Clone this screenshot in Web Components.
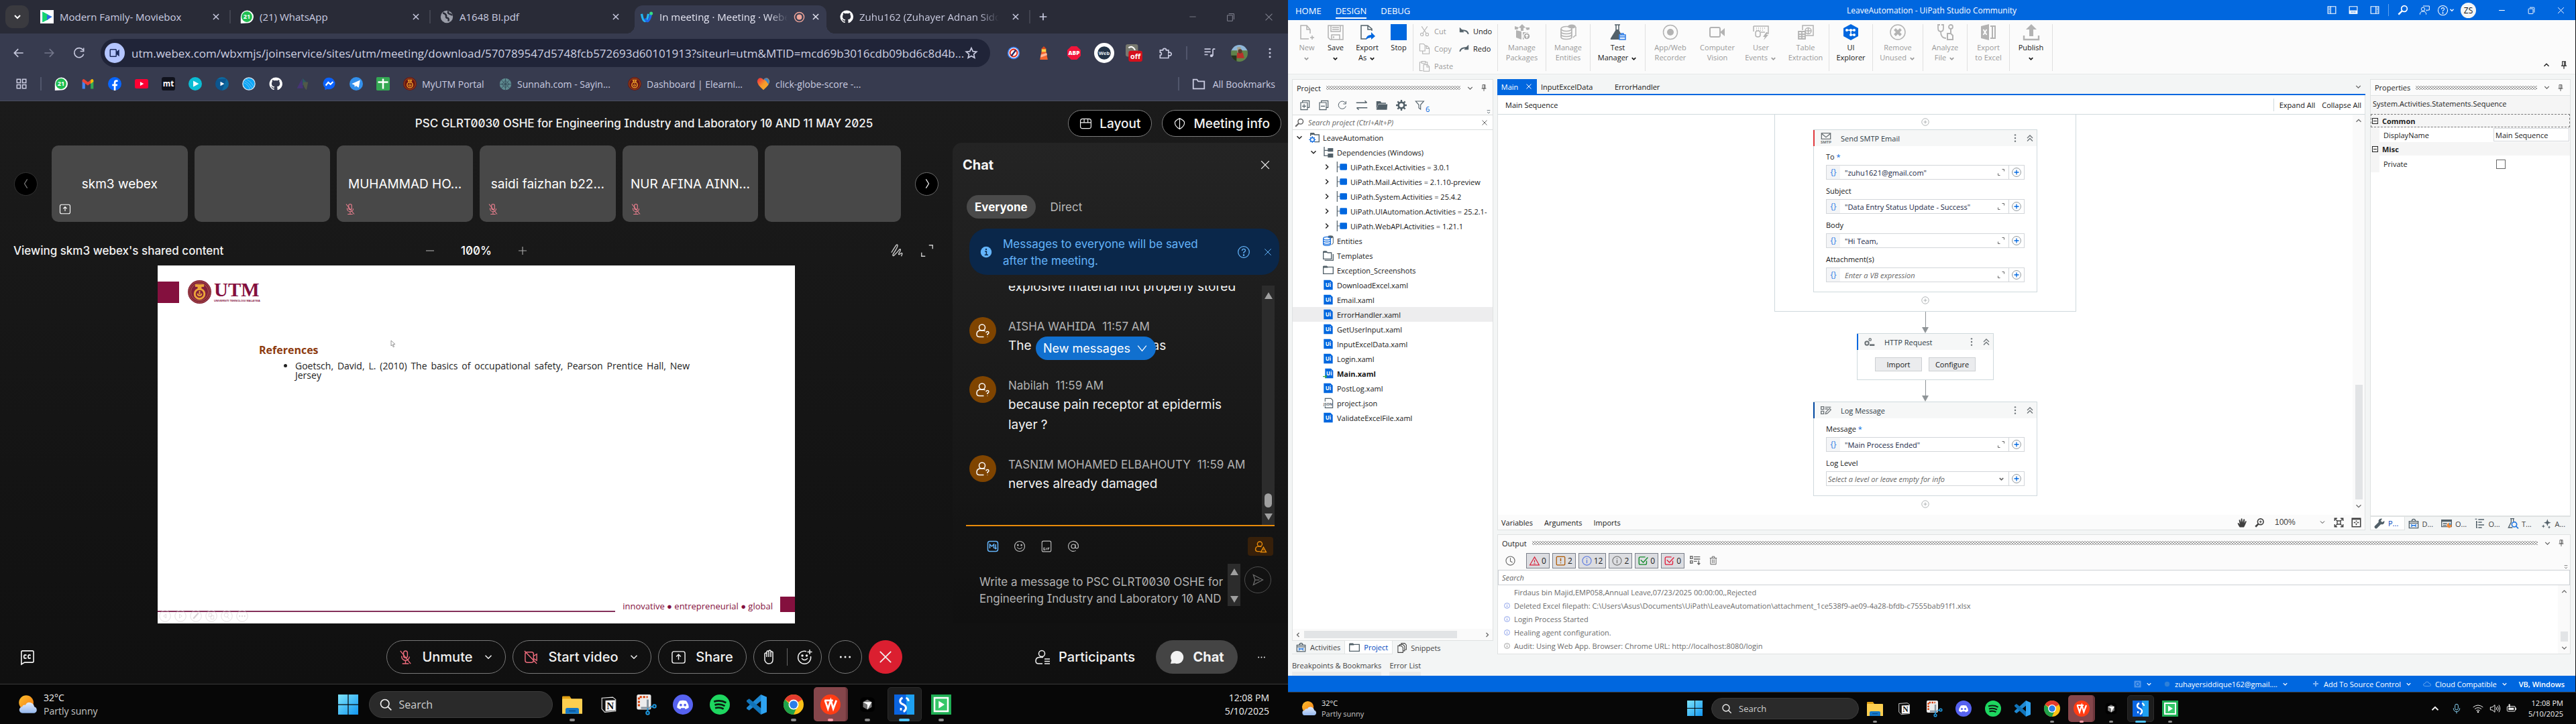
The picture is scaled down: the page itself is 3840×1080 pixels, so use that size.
<!DOCTYPE html>
<html lang="en">
<head>
<meta charset="utf-8">
<title>Desktop</title>
<style>
html,body{margin:0;height:100%;background:#000;overflow:hidden}
body{font-family:"Open Sans","Noto Sans",sans-serif}
</style>
</head>
<body>
<dual-desktop></dual-desktop>
<script>
const BASE = `*{box-sizing:border-box}
button,input,select,textarea{font:inherit;color:inherit;background:none;border:0;padding:0;margin:0;border-radius:0;outline:0}
button{display:flex;align-items:center;justify-content:center;white-space:nowrap}
a{color:inherit;text-decoration:none}`;
function define(tag, css, render){
  customElements.define(tag, class extends HTMLElement{
    connectedCallback(){
      if(this.shadowRoot) return;
      this.attachShadow({mode:'open'}).innerHTML = `<style>${BASE}${css}</style>${render(this)}`;
    }
  });
}
const ic = (name, size, extra='') => `<ui-icon name="${name}" size="${size}" ${extra}></ui-icon>`;
const F = 'stroke="none" fill="currentColor"';
const ICONS = {
  down:'<path d="M6 9l6 6 6-6"/>', up:'<path d="M6 15l6-6 6 6"/>', right:'<path d="M9 6l6 6-6 6"/>', left:'<path d="M15 6l-6 6 6 6"/>',
  wdown:'<path d="M4 7l8 10 8-10"/>', wleft:'<path d="M14 4L9 12l5 8"/>', wright:'<path d="M10 4l5 8-5 8"/>',
  x:'<path d="M5 5l14 14M19 5L5 19"/>', plus:'<path d="M12 4v16M4 12h16"/>', minus:'<path d="M4 12h16"/>',
  back:'<path d="M20 12H5M11 5l-7 7 7 7"/>', fwd:'<path d="M4 12h15M13 5l7 7-7 7"/>',
  reload:'<path d="M19 7A8.5 8.5 0 1 0 20 14M20 3v6h-6"/>',
  restore:'<rect x="5" y="8" width="11" height="12" rx="1"/><path d="M8 5h10q1 0 1 1v11"/>',
  star:'<path d="M12 3l2.7 6.2 6.600.6-5 4.400 1.500 6.600L12 17.300 6.200 20.800 7.700 14.200l-5-4.400 6.600-.6z"/>',
  dotsv:`<g ${F}><circle cx="12" cy="5" r="1.800"/><circle cx="12" cy="12" r="1.800"/><circle cx="12" cy="19" r="1.800"/></g>`,
  dotsh:`<g ${F}><circle cx="4" cy="12" r="1.800"/><circle cx="12" cy="12" r="1.800"/><circle cx="20" cy="12" r="1.800"/></g>`,
  camera:'<rect x="3" y="5" width="12" height="14" rx="1"/><path d="M15 11l5-4v10l-5-4" fill="currentColor"/>',
  apps:'<rect x="3" y="3" width="7" height="7"/><rect x="14" y="3" width="7" height="7"/><rect x="3" y="14" width="7" height="7"/><rect x="14" y="14" width="7" height="7"/>',
  folder:'<path d="M3 5h6l2 3h10v12H3z"/>',
  puzzle:'<path d="M4 7h5a3 3 0 1 1 6 0h4v5a3 3 0 1 1 0 4v5H4v-5a2.500 2.500 0 1 0 0-5z"/>',
  queue:`<path d="M3 5h11M3 10h11M3 15h6M18 5v12M18 5h4"/><circle cx="15.500" cy="17" r="2.500" ${F}/>`,
  rec:'<circle cx="12" cy="12" r="10" stroke="#f0a59a" stroke-width="2"/><circle cx="12" cy="12" r="5.500" fill="#f0a59a" stroke="none"/>',
  globe:'<circle cx="12" cy="12" r="11" fill="#9a9da8" stroke="none"/><path d="M5 5q5 1 6 5-1 4 2 4t2 6M15 2q-2 4 2 5t4 3" stroke="#292b37" stroke-width="3"/>',
  moviebox:'<rect width="24" height="24" fill="#fff" stroke="none"/><path d="M4 3l17 9-17 10z" fill="#15b6e8" stroke="none"/><path d="M4 3l10 5v9L4 22z" fill="#16d56e" stroke="none"/><path d="M12 8l9 4-9 6z" fill="#3468e0" stroke="none"/>',
  whatsapp:'<path d="M1 24V12A11.500 11.500 0 1 1 12 23.500z" fill="#fff" stroke="none"/><circle cx="12" cy="12" r="9.500" fill="#1fbd4f" stroke="none"/><text x="12" y="16" font-size="11" font-weight="700" text-anchor="middle" fill="#fff" stroke="none">21</text>',
  webex:'<path d="M3 7q2 13 6 13t6-13" stroke="#21b6f3" stroke-width="4"/><path d="M9 15q2 5 4 5 4 0 7-13" stroke="#1f66e8" stroke-width="4"/><circle cx="20" cy="6" r="3" fill="#35dc85" stroke="none"/>',
  github:'<path fill="#fff" stroke="none" d="M12 .5a11.500 11.500 0 0 0-3.600 22.400c.6.100.8-.3.8-.6v-2c-3.200.7-3.900-1.500-3.900-1.500-.5-1.300-1.300-1.700-1.300-1.700-1-.7.100-.7.100-.7 1.200.1 1.800 1.200 1.800 1.200 1 1.800 2.700 1.300 3.400 1 .1-.8.400-1.300.7-1.600-2.600-.3-5.300-1.300-5.300-5.700 0-1.300.5-2.300 1.200-3.100-.1-.3-.5-1.500.1-3.100 0 0 1-.3 3.200 1.200a11 11 0 0 1 5.800 0c2.200-1.500 3.200-1.200 3.200-1.200.6 1.600.2 2.800.1 3.100.7.800 1.200 1.800 1.200 3.100 0 4.400-2.700 5.400-5.300 5.700.4.400.8 1.100.8 2.200v3.200c0 .3.200.7.800.6A11.500 11.500 0 0 0 12 .5z"/>',
  gmail:'<g stroke="none"><path d="M2 6v15h5V10z" fill="#4285f4"/><path d="M22 6v15h-5V10z" fill="#34a853"/><path d="M2 6q1-4 5-1l5 4 5-4 0 6-5 4L2 8z" fill="#ea4335"/><path d="M17 5q4-3 5 1v2l-5 4z" fill="#fbbc04"/></g>',
  facebook:'<circle cx="12" cy="12" r="12" fill="#0866ff" stroke="none"/><path d="M10.500 24v-8H7.500v-3.500h3V10q0-5 4.500-5 1.500 0 2.500.3v3h-2q-1.800 0-1.800 2v2.200H17l-.6 3.500h-2.700v8z" fill="#fff" stroke="none"/>',
  youtube:'<rect y="3.500" width="24" height="17" rx="3" fill="#ff0033" stroke="none"/><path d="M9.500 8.500v7l6.500-3.500z" fill="#fff" stroke="none"/>',
  mt:'<rect width="24" height="24" rx="4" fill="#10121c" stroke="none"/><text x="12" y="16.500" font-size="14" font-weight="700" text-anchor="middle" fill="#fff" stroke="none">mt</text>',
  tealplay:'<circle cx="12" cy="12" r="12" fill="#0bbdd4" stroke="none"/><path d="M8.500 6.500v11l10-5.500z" fill="#fff" stroke="none"/>',
  blueplay:'<circle cx="12" cy="12" r="12" fill="#0d6aa0" stroke="none"/><path d="M3 4a12 12 0 0 0 9 20L20 3z" fill="#0a3c78" stroke="none" opacity=".45"/><path d="M9 8v8l7-4z" fill="#fff" stroke="none"/>',
  sphere:'<circle cx="12" cy="12" r="11" fill="#0ea5f5" stroke="#d5e7f4" stroke-width="1.500"/><path d="M4 6q9 5 14 14M7 3q9 5 14 14M3 10q8 3 11 12" stroke="#9ed4f6" stroke-width=".8"/>',
  prism:'<g stroke="none"><path d="M11 3L2 20h11z" fill="#473477"/><path d="M12 2l8 8-8 5z" fill="#2b5960"/><path d="M13 9h9l-3 14q-6-5-6-14" fill="#515849"/></g>',
  messenger:'<path d="M12 1a11 10.500 0 1 1-4 20.500L4 23v-4A10.500 10.500 0 0 1 12 1z" fill="#0a62ff" stroke="none"/><path d="M5.500 15l4.500-5.500 4 3.500 4.500-4.500" stroke="#fff" stroke-width="2.600"/>',
  telegram:'<circle cx="12" cy="12" r="12" fill="#3390ec" stroke="none"/><path d="M4 12l15-6.500-2.500 13.500-5-3.500-2 2.500-.7-4z" fill="#fff" stroke="none"/>',
  sheets:'<rect width="24" height="24" rx="2" fill="#34a853" stroke="none"/><path d="M12 3v18M3 9h18" stroke="#fff" stroke-width="3"/>',
  utm:'<circle cx="12" cy="12" r="12" fill="#6b1512" stroke="none"/><circle cx="12" cy="12" r="10" stroke="#a86420" stroke-width=".9"/><path d="M8 5.500h8M10 6v3h4V6" stroke="#e89a28" stroke-width="1.800"/><circle cx="12" cy="14" r="5" stroke="#e89a28" stroke-width="1.800"/><path d="M12 11v3.500M9.800 13.500q0 2.500 2.200 2.500t2.200-2.500" stroke="#e89a28" stroke-width="1.300"/>',
  seal:'<circle cx="12" cy="12" r="12" fill="#84203a" stroke="none"/><circle cx="12" cy="12" r="10.800" stroke="#c98a52" stroke-width=".6" stroke-dasharray="1 .6"/><circle cx="12" cy="12" r="9" stroke="#c98a52" stroke-width=".4"/><path d="M7.500 5.500h9" stroke="#eba53a" stroke-width="2.600"/><path d="M12 6v4" stroke="#eba53a" stroke-width="4"/><circle cx="12" cy="14" r="5" stroke="#eba53a" stroke-width="2"/><path d="M12 11v3.500M10 13.500q0 2.300 2 2.300t2-2.300" stroke="#eba53a" stroke-width="1.300"/>',
  sunnah:'<circle cx="12" cy="12" r="11" fill="#5e8a90" stroke="none"/><path d="M12 1v22M1 12h22M4 4l16 16M20 4L4 20M5 12l7-7 7 7-7 7z" stroke="#37505d" stroke-width="1.200"/>',
  heart:'<defs><linearGradient id="h" x1="0" x2="1" y1="0" y2="1"><stop offset=".15" stop-color="#f0443a"/><stop offset=".5" stop-color="#f79a2a"/><stop offset="1" stop-color="#f6b12a"/></linearGradient></defs><path d="M12 23Q0 13 1 7q2-7 8-5 2 1 3 3 1-2 3-3 6-2 8 5 1 6-11 16" fill="url(#h)" stroke="none"/><path d="M13 4q3-4 7-1 4 4 1 10-3-6-8-9" fill="#3e86c4" stroke="none"/>',
  noscript:'<circle cx="12" cy="12" r="11" fill="#4285f4" stroke="none"/><circle cx="12" cy="12" r="9" fill="#fff" stroke="none"/><circle cx="12" cy="12" r="6.500" stroke="#d93025" stroke-width="2.500"/><path d="M8 17l8-10" stroke="#222a66" stroke-width="3"/>',
  lighthouse:'<g stroke="none"><path d="M8 9h8l3 15H5z" fill="#f4652f"/><path d="M7 15l10-3 1 4-12 4z" fill="#ffb797"/><path d="M8 5h8v5H8z" fill="#ffd54a"/><path d="M7 5l5-5 5 5z" fill="#d9481c"/></g>',
  abp:'<path d="M7 0h10l7 7v10l-7 7H7l-7-7V7z" fill="#f2153a" stroke="none"/><text x="12" y="16" font-size="10" font-weight="800" text-anchor="middle" fill="#fff" stroke="none">ABP</text>',
  webbadge:'<circle cx="12" cy="12" r="12" fill="#fff" stroke="none"/><circle cx="12" cy="12" r="7.800" fill="#243447" stroke="none"/><text x="12" y="14" font-size="6" font-weight="700" text-anchor="middle" fill="#e6eef5" stroke="none">Web</text>',
  offext:'<rect width="17" height="17" rx="3" fill="#77796f" stroke="none"/><path d="M4 5q5-4 9 3" stroke="#fff" stroke-width="2"/><rect x="4" y="9" width="19" height="15" rx="3" fill="#d5101c" stroke="none"/><text x="13.500" y="20" font-size="10" font-weight="700" text-anchor="middle" fill="#fff" stroke="none">off</text>',
  avatar:'<defs><clipPath id="c"><circle cx="12" cy="12" r="12"/></clipPath></defs><g clip-path="url(#c)" stroke="none"><path fill="#8fb6d8" d="M0 0h24v9H0z"/><path fill="#60824a" d="M0 8h24v16H0z"/><path fill="#a6a28e" d="M9 3h5v8H9z"/><path fill="#b8302a" d="M9 11h8l2 8H8z"/><circle cx="13" cy="9" r="3" fill="#5a3c2c"/><path fill="#26331f" d="M0 15h8v9H0z"/></g>',
  sharebox:'<rect x="2" y="3" width="20" height="18" rx="3"/><path d="M12 16V8M8.500 11L12 7.500l3.500 3.500"/>',
  micoff:'<rect x="9" y="2" width="6" height="11" rx="3"/><path d="M6 10v1a6 6 0 0 0 12 0M12 17v4M7 22h10M4 2l16 20"/>',
  camoff:'<rect x="3" y="4" width="13" height="16" rx="3"/><path d="M16 10l5-3v10l-5-3M2 2l19 20"/>',
  layout:'<rect x="2" y="3" width="20" height="18" rx="4"/><path d="M2 10h20M9 3v7M16 3v7"/>',
  shield:'<path d="M12 2q9 4 9 8 0 7-9 12-9-5-9-12 0-4 9-8zM12 2v20"/>',
  scribble:'<path d="M2 15q5-8 7-11t3-1q1 2-7 14-2 4 1 3 6-6 9-10 3-2 1 3-4 6-1 5l3-2q3-1 0 5"/>',
  full:'<path d="M15 3h6v6M9 21H3v-6"/>',
  info:'<circle cx="12" cy="12" r="11" fill="currentColor" stroke="none"/><path d="M9.500 10.500H12.500v7M9 17.700h7" stroke="#0a274a" stroke-width="2"/><circle cx="12" cy="6.500" r="1.600" fill="#0a274a" stroke="none"/>',
  help:'<circle cx="12" cy="12" r="10"/><path d="M9 9.500q.2-3 3-3t3 2.700q0 1.800-3 3.300v2"/><circle cx="12" cy="17.500" r=".8" fill="currentColor"/>',
  guest:'<circle cx="11" cy="7.500" r="4.500"/><path d="M13.500 21.500H7q-4 0-4-4 0-5 5-5.500h5q1.500 0 2.500 1M17 15.500q.2-2 2-2t2 1.800q0 1.200-2 2.200v1.500M19 21.500v.5"/>',
  warnuser:'<circle cx="10" cy="7" r="4.500"/><path d="M11 21H6q-4 0-4-4 0-5 5-5.500h4l2 1M17 13l5 9H12zM17 17v2"/>',
  md:'<rect x="2" y="2" width="20" height="20" rx="4"/><path d="M6 16V8l4 4 4-4v8M17.500 8v9M15.500 15l2 2 2-2"/>',
  smile:'<circle cx="12" cy="12" r="10"/><path d="M7 14q5 6 10 0"/><circle cx="8.500" cy="9.500" r="1" fill="currentColor"/><circle cx="15.500" cy="9.500" r="1" fill="currentColor"/>',
  gif:'<rect x="3" y="1.500" width="18" height="21" rx="3"/><path d="M9 15H6.500v4H9v-2M12 15v4M15 19v-4h3M15 17h2"/>',
  at:'<circle cx="12" cy="12" r="4"/><path d="M16 8v5q0 3 3 3t3-4A10 10 0 1 0 17 20.500"/>',
  send:'<path d="M4 3l17 9-17 9 3-9zM7 12h8"/>',
  cc:'<path d="M4 2h16q2 0 2 2v14q0 2-2 2H8l-5 3V4q0-2 2-2"/><path d="M11 9q-4-2-4 2t4 2M17.500 9q-4-2-4 2t4 2" stroke-width="2"/>',
  hand:'<path d="M5 13V7q1.500-2 3 0V4q1.500-2 3 0V3q1.500-2 3 0v2q1.500-2 3 0v11q0 6-6 6-4 0-6-5zM8 7v5M11 4v8M14 5v7"/>',
  smileplus:'<path d="M20.500 11A9.500 9.500 0 1 1 14 3.700M7 14q4 5 9 0M19 1v7M15.500 4.500h7"/><circle cx="8" cy="10" r="1" fill="currentColor"/><circle cx="14.500" cy="10" r="1" fill="currentColor"/>',
  people:'<circle cx="11" cy="7" r="4.500"/><path d="M12 22H6q-4 0-4-4 0-5 5-5.500h6M15 15h8M15 18.500h8M15 22h8"/>',
  bubble:`<path d="M12 2a10 10 0 1 1-3 19.500L2 22l1.500-5A10 10 0 0 1 12 2z" ${F}/>`,
  cursor:'<path d="M6 2l12 11-6 .5 3 7-2.500 1-3-7L6 18z" fill="#fff" stroke="#777"/>',
  pleft:'<circle cx="12" cy="12" r="11"/><path d="M14 8l-5 4 5 4z"/>', pright:'<circle cx="12" cy="12" r="11"/><path d="M10 8l5 4-5 4z"/>',
  ppen:'<circle cx="12" cy="12" r="11"/><path d="M7 17l10-11" stroke-width="3"/>', pgrid:'<circle cx="12" cy="12" r="11"/><path d="M7 7h6v6H7zM11 11h6v7h-6z"/>',
  pzoom:'<circle cx="12" cy="12" r="11"/><circle cx="11" cy="10" r="4"/><path d="M13 13l4 5"/>', pdots:'<circle cx="12" cy="12" r="11"/><path d="M6 12h2M11 12h2M16 12h2" stroke-width="3"/>',
  search:'<circle cx="10.500" cy="10.500" r="7.500"/><path d="M16 16l6 6"/>',
  lens:'<circle cx="15" cy="9" r="6.500" stroke-width="2.400"/><path d="M10 14l-8 8" stroke-width="3.500"/>',
  weather:'<defs><linearGradient id="s" x1="0" y1="0" x2="1" y2="1"><stop stop-color="#fdbf2d"/><stop offset="1" stop-color="#f47b14"/></linearGradient><linearGradient id="k" x1="0" y1="0" x2="0" y2="1"><stop stop-color="#e2ecfb"/><stop offset="1" stop-color="#95b8ee"/></linearGradient></defs><circle cx="10" cy="10" r="9" fill="url(#s)" stroke="none"/><path d="M6 23a4 4 0 0 1-1-8q1-3 4-2 2-4 6-3 4 1 5 5 3 1 3 4t-3 4z" fill="url(#k)" stroke="none"/>',
  start:'<defs><linearGradient id="w" x1="0" y1="0" x2="1" y2="1"><stop stop-color="#7ee4fb"/><stop offset="1" stop-color="#1296f0"/></linearGradient></defs><path d="M0 0h11.500v11.500H0zM12.500 0H24v11.500H12.500zM0 12.500h11.500V24H0zM12.500 12.500H24V24H12.500z" fill="url(#w)" stroke="none"/>',
  explorer:'<g stroke="none"><path d="M0 3q0-1 1-1h8l2 3v6H0z" fill="#e0a014"/><path d="M0 6q0-1 1-1h22q1 0 1 1v17H0z" fill="#fdcf50"/><path d="M4 23v-5q0-2 2-2h12q2 0 2 2v5z" fill="#1478c8"/><path d="M8 19h8v1.200H8z" fill="#0b4a86"/></g>',
  notion:'<g stroke="none"><path d="M2 3l15-1 4 3v16l-15 1.500L2 18z" fill="#111" stroke="#e8e8e8" stroke-width="1"/><path d="M7 6.500L20.500 6v14L7 21z" fill="#fff"/><text x="13.700" y="18.500" font-size="14" font-family="Liberation Serif" font-weight="700" text-anchor="middle" fill="#111">N</text></g>',
  snip:'<rect x="1" y="0" width="17" height="18" rx="2" fill="#ececec" stroke="none"/><path d="M3.500 14V3H14" stroke="#d83b01" stroke-width="2.400" stroke-dasharray="2.500 1.500"/><path d="M14 6v10M6 16h11" stroke="#8a96a0" stroke-width="2.400"/><g stroke="#1e96dc" stroke-width="1.600"><path d="M14 16v4M17 14.500h3"/><circle cx="14" cy="22" r="1.800"/><circle cx="22" cy="14" r="1.800"/></g>',
  discord:'<circle cx="12" cy="12" r="12" fill="#5662f0" stroke="none"/><path d="M8 7.500q4-1 8 0 3 4 3 8-2 1.500-4 2l-1-1.500q-2 .5-4 0L9 17.500q-2-.5-4-2 0-4 3-8z" fill="#fff" stroke="none"/><g fill="#5662f0" stroke="none"><circle cx="9.500" cy="12.500" r="1.500"/><circle cx="14.500" cy="12.500" r="1.500"/></g>',
  spotify:'<circle cx="12" cy="12" r="12" fill="#1ed760" stroke="none"/><path d="M5 8.500q8-2.500 14.500 1.300M6 12.500q6.500-2 12 1.200M6.500 16.200q5.500-1.500 10 1" stroke="#0b1b10" stroke-width="2.100"/>',
  vscode:'<g stroke="none"><path d="M17 0l1 7L3 19 0 17V15.500z" fill="#1e88d2"/><path d="M17 24l1-7L3 5 0 7v1.500z" fill="#1173b8"/><path d="M17 0l7 3v18l-7 3z" fill="#2ea3f2"/></g>',
  chrome:'<g stroke="none"><circle cx="12" cy="12" r="12" fill="#fbc116"/><path d="M12 12L1.600 6A12 12 0 0 1 22.400 6z" fill="#e33b2e"/><path d="M12 12h-4L1.600 6A12 12 0 0 0 12 24l3-7z" fill="#1fa24a"/><circle cx="12" cy="12" r="6" fill="#fff"/><circle cx="12" cy="12" r="4.700" fill="#2a7de9"/></g>',
  wps:'<circle cx="12" cy="12" r="12" fill="#ff3c14" stroke="none"/><path d="M5 7h10M5.500 7l3.500 10 3.300-10 3 10 3.700-10" stroke="#fff" stroke-width="2.200"/>',
  cube:'<rect x="2" y="2" width="20" height="20" rx="5" fill="#000" stroke="none"/><path d="M12 5l6 3.500v7L12 19l-6-3.500v-7z" fill="#777" stroke="none"/><path d="M6 8.500h12L12 19v-7z" fill="#fff" stroke="none"/>',
  uipath:'<rect width="24" height="24" fill="#0a64e0" stroke="none"/><path d="M14 0h10v24h-9z" fill="#1ea0f0" stroke="none"/><path d="M10 4q-3 1-3 4 0 2.500 4 4 3 1.500 3 4 0 3-3 4.500" stroke="#fff" stroke-width="2.400"/><path d="M14 4q3 1 3 4M8 16v3" stroke="#fff" stroke-width="2.200"/>',
  player:'<rect width="24" height="24" fill="#1fae54" stroke="none"/><rect x="4" y="4" width="16" height="16" fill="#34c768" stroke="#fff" stroke-width="2"/><path d="M9 7.500v9l7-4.500z" fill="#fff" stroke="none"/>',
  tmic:'<rect x="8.500" y="2" width="7" height="13" rx="3.500"/><path d="M5 11v1a7 7 0 0 0 14 0v-1M12 19v4"/>',
  wifi:`<path d="M1 9q11-9 22 0M4.500 13q7.500-6 15 0M8 16.500q4-3 8 0"/><circle cx="12" cy="19.500" r="2" ${F}/>`,
  vol:'<path d="M2 9h4l6-5v16l-6-5H2zM15 9q2 3 0 6M18 6.500q4 5.500 0 11M21 4q5 8 0 16"/>',
  batt:`<rect x="2" y="7" width="18" height="11" rx="2"/><path d="M5 10h12v5H5z" ${F}/><path d="M21.500 10v5" stroke-width="2"/><path d="M7 2v7" stroke-width="3"/>`,
  pleftp:'<path d="M2 3h20v18H2z"/><path d="M9 3v18"/><path d="M5.500 6v13" stroke-width="2.500" stroke-dasharray="2 2"/>',
  pbotp:`<path d="M2 3h20v18H2z"/><path d="M2 13h20v8H2z" ${F}/><path d="M6 17h13" stroke="#0067df" stroke-width="2.500" stroke-dasharray="2 2"/>`,
  prightp:'<path d="M2 3h20v18H2z"/><path d="M15 3v18"/><path d="M18.500 6v13" stroke-width="2.500" stroke-dasharray="2 2"/>',
  feedback:'<circle cx="9" cy="10" r="4"/><path d="M2 22q0-7 7-7t7 7M9 3h14v9h-4l-2 2v-3"/>',
  newf:'<path d="M17 14V8l-5-6H3v20h12M12 2v6h5M20 17v6M17 20h6"/>',
  save:'<path d="M1 2h22v21H4l-3-3zM5 2v9h14V2M7 5h10M7 8h10M6 23v-7h12v7M9 18v3"/>',
  exportas:'<path d="M19 10V7l-6-5H3v20h8M13 2v6h6"/><path d="M10 23q1-7 8-7v-4l6 6-6 5v-3q-4 0-8 3z" fill="#0067df" stroke="none"/>',
  stop:'<path d="M0 0h24v24H0z" fill="#0067df" stroke="none"/>',
  cut:'<path d="M6 2l10 15M18 2L8 17"/><circle cx="6.500" cy="19" r="3"/><circle cx="17.500" cy="19" r="3"/>',
  copy:'<path d="M2 2h8l3 3v12H2zM13 6h4l5 5v12H8v-6M16 6v6h6"/>',
  paste:'<path d="M8 22H2V4h4M14 4h4v4M6 2h8v4H6z"/><path d="M10 9h8l4 4v10H10zM17 9v5h5"/>',
  undo:'<path d="M22 19q-2-10-16-9" stroke-width="3"/><path d="M2 4v10h9z" fill="currentColor"/>',
  redo:'<path d="M2 19q2-10 16-9" stroke-width="3"/><path d="M22 4v10h-9z" fill="currentColor"/>',
  packages:`<g ${F}><path d="M3 9l8 2v12l-8-3zM21 12h-8v11l8-3z"/><path d="M12 0l5 5-3 1v4h-4V6L7 5z"/><path d="M1 3l6 2-2 3-4 0zM23 5l-6 0 2 4 4-1z"/></g><circle cx="19" cy="18" r="5" fill="#aaa" stroke="#fbfbfb"/><path d="M19 21v-5M17 18l2-2 2 2" stroke="#fff"/>`,
  dbs:`<g stroke-width="1.700"><ellipse cx="9" cy="7" rx="8" ry="3.500"/><path d="M1 7v4q0 3.500 8 3.500t8-3.500V7M1 11v4q0 3.500 8 3.500t8-3.500v-4M1 15v4q0 3.500 8 3.500t8-3.500v-4"/></g><ellipse cx="17" cy="3.500" rx="6" ry="3" ${F}/><path d="M23 4v14M19 20l3-3"/>`,
  dbblue:'<ellipse cx="17" cy="3.500" rx="6" ry="3" fill="#526069" stroke="none"/><path d="M23 4v14l-4 3" stroke="#526069"/><g stroke="#1f74e0" stroke-width="2"><ellipse cx="9" cy="7" rx="8" ry="3.500"/><path d="M1 7v5q0 3 8 3t8-3V7M1 12v5q0 3 8 3t8-3v-5M1 16v4q0 3 8 3t8-3v-4"/></g>',
  flask:`<path d="M7 1h8M9 1v8M13 1v8"/><path d="M9 8h4l5 10-4 5H2q-2 0-1-2z" ${F}/><path d="M14 15h9v8h-9z" fill="#e3eefc" stroke="none"/><path d="M14 16h9v7h-9zM17 16v-2h3v2M14 19h9" stroke="#2f7ee6"/>`,
  recorder:`<circle cx="12" cy="12" r="10.500"/><circle cx="12" cy="12" r="5" ${F}/>`,
  vision:`<rect x="1" y="5" width="15" height="14" rx="2" stroke-width="2"/><path d="M16 12l7-6v12z" ${F}/>`,
  events:`<path d="M1 3h22v11h-4M1 3v8M5 6h1M8 6h1M11 6h1M14 6h1M17 6h1M5 9h1M8 9h1M11 9h1M14 9h1M12 12h6"/><rect x="4" y="10" width="7" height="9" rx="3"/><path d="M20 12l-5 7h3l-2 5 7-8h-3l2-4z" ${F}/>`,
  table:'<path d="M7 9V2h16v15H12"/><circle cx="15.500" cy="10" r="4.500"/><path d="M11 10h9M15.500 5.500v9"/><path d="M1 11h10v11H1zM1 15h10M1 18.500h10M6 11v11" stroke-width="1.800"/>',
  uiexp:'<path d="M12 0l11 6v12l-11 6L1 18V6z" fill="#0067df" stroke="none"/><path d="M6 9h11M12 9v7h5" stroke="#fff"/><g fill="#fff" stroke="none"><circle cx="6" cy="9" r="2"/><circle cx="12" cy="9" r="2"/><circle cx="17" cy="9" r="2"/><circle cx="17" cy="16" r="2"/><circle cx="12" cy="16" r="2"/></g>',
  remove:'<circle cx="12" cy="12" r="11"/><path d="M7.500 7.500l9 9M16.500 7.500l-9 9" stroke-width="4"/>',
  analyze:'<path d="M4 1H1v5q0 5 4 5t4-5V1H6M5 11q0 10 8 10" stroke-width="1.800"/><circle cx="20" cy="4" r="3" stroke-width="1.800"/><path d="M20 7v6M15 14h5l3 3v6h-8z" stroke-width="2"/>',
  excel:`<path d="M1 3l12-3v24L1 21z" ${F}/><path d="M15 3h7v18h-7M18 3v18" stroke-width="2"/><path d="M4.500 8l5 8M9.500 8l-5 8" stroke="#fff" stroke-width="1.800"/>`,
  publish:`<path d="M12 0l8 8h-5v10H9V8H4z" ${F}/><path d="M1 17v6h22v-6" stroke-width="2.400"/>`,
  pin:'<path d="M8 3h8v11H8zM5 14h14M12 14v8M13 3v11" stroke-width="2"/>',
  expandall:'<path d="M7 6V2h15v15h-4M3 6h15v16H3zM10.500 9.500v9M6 14h9" stroke-width="1.800"/>',
  collapseall:'<path d="M7 6V2h15v15h-4M3 6h15v16H3zM6 14h9" stroke-width="1.800"/>',
  swap:'<path d="M1 7h21M18 3l4 4M23 17H2M6 21l-4-4" stroke-width="1.800"/>',
  folderfill:`<path d="M1 4h8l2 3h9v2H5L1 20z" ${F}/><path d="M5 10h18l-1 11H1z" ${F}/>`,
  gear:'<circle cx="12" cy="12" r="6.500" stroke-width="4"/><path d="M12 0v5M12 19v5M0 12h5M19 12h5M3.500 3.500l4 4M16.500 16.500l4 4M3.500 20.500l4-4M16.500 7.500l4-4" stroke-width="3.500"/>',
  filter:'<path d="M2 3h18l-7 8v10l-4-3v-7z" stroke-width="1.700"/>',
  overflow:'<path d="M5 5h14M6 12l6 6 6-6" stroke-width="2.500"/>',
  projfolder:'<path d="M4 9V3h7l2 3h10v16H13" stroke="#526069" stroke-width="2"/><path d="M4 2h8l2 4H4z" fill="#526069" stroke="none"/><circle cx="8" cy="17" r="4.500" stroke="#1f74e0" stroke-width="2.400"/><path d="M8 9.500v3M8 21v3M.5 17h3M12.500 17h3M3 12l2 2M11 20l2 2M3 22l2-2M11 14l2-2" stroke="#1f74e0" stroke-width="2"/>',
  deps:`<path d="M3 0v20h9M3 8h9" stroke-width="2"/><path d="M11 3h12v8H11zM11 15h12v9H11z" ${F}/>`,
  dep:'<path d="M2 0v24M2 12h8" stroke="#526069" stroke-width="1.800"/><rect x="8" y="5" width="16" height="14" rx="2" fill="#0067df" stroke="none"/>',
  folders:'<path d="M1 4h7l3 2h8v14H1zM23 9v14H4" stroke-width="2"/><path d="M1 2h7l3 4H1z" fill="currentColor" stroke="none"/>',
  folderrow:'<path d="M1 5h22v15H1z" stroke-width="2"/><path d="M1 3h8l2 3H1z" fill="currentColor"/>',
  xaml:'<path d="M2 1h15l5 5v17H2z" fill="#0067df" stroke="none"/><text x="12" y="17" font-size="12" font-weight="700" text-anchor="middle" fill="#fff" stroke="none">Ui</text>',
  xamlmain:'<path d="M5 1h13l5 5v17H5z" fill="#0067df" stroke="none"/><text x="14" y="17" font-size="12" font-weight="700" text-anchor="middle" fill="#fff" stroke="none">Ui</text><path d="M0 19h8M5 16l3 3-3 3" stroke="#3aa648" stroke-width="2"/>',
  json:'<path d="M5 9V2h13l4 4v17H5v-4" stroke-width="1.700"/><text x="11" y="17.500" font-size="8" font-weight="700" text-anchor="middle" fill="currentColor" stroke="none">JSON</text>',
  toolbox:'<path d="M2 7h20v15H2zM8 7q0-5 4-5t4 5" stroke="#526069" stroke-width="2"/><path d="M2 11h20" stroke="#526069" stroke-width="2"/><path d="M6 14l3 2h6l3-2M6 19l3-2M18 19l-3-2" stroke="#1f74e0" stroke-width="2.200"/>',
  snippets:'<path d="M3 7h8l4 4v12H3zM7 7V4h8l4 4v11h-3M11 4V1h8l4 4v11h-3" stroke-width="1.700"/>',
  addc:'<circle cx="12" cy="12" r="10.500"/><path d="M12 7v10M7 12h10"/>',
  addb:'<circle cx="12" cy="12" r="11" stroke="#7d868c"/><path d="M12 6v12M6 12h12" stroke="#0067df" stroke-width="2.200"/>',
  collapse2:'<path d="M4 12l8-8 8 8M4 21l8-8 8 8" stroke-width="2.500"/>',
  smtp:'<path d="M2 1h20v13H2zM2 2l10 8 10-8" stroke-width="2"/><text x="12" y="23.500" font-size="9" font-weight="700" text-anchor="middle" fill="currentColor" stroke="none">SMTP</text>',
  http:`<circle cx="6" cy="15" r="4" stroke-width="3"/><circle cx="13" cy="7" r="2.500" stroke-width="2"/><path d="M12 17h11v4H12z" ${F}/>`,
  log:'<path d="M1 4h6v6H1zM1 14h6v6H1zM10 5h13M10 9h6" stroke-width="2"/><path d="M11 20l1-4 8-8 3 3-8 8z" stroke-width="1.800"/>',
  handf:`<path d="M6 23q-5-7-5-10 2-1 5 3L4 6q2-2 3 0l2 6V3q2-2 3 0l1 9 2-8q2-1 3 1l-1 8 3-5q2 0 2 2-3 8-6 13z" ${F}/>`,
  zoomf:'<circle cx="14" cy="10" r="7" stroke-width="2.600"/><path d="M9 15l-7 7" stroke-width="4"/><path d="M14 7v6M11 10h6" stroke-width="1.800"/>',
  fit:`<g stroke-width="2.200"><path d="M2 8V2h6M16 2h6v6M22 16v6h-6M8 22H2v-6M3 3l5 5M21 3l-5 5M3 21l5-5M21 21l-5-5"/><path d="M8 8h8v8H8z"/></g>`,
  overview:'<path d="M2 2h20v20H2zM2 4h20" stroke-width="2.500"/><path d="M12 7v3M12 14v4M6 12h4M14 12h4" stroke-width="2.500"/>',
  clock:'<circle cx="12" cy="12" r="10.500"/><path d="M12 5v8l5 3"/>',
  oerr:'<path d="M12 3l11 19H1z" stroke="#d8213b" stroke-width="2"/><path d="M12 10v6M12 18v2M9 19h1M14 19h1" stroke="#d8213b" stroke-width="2"/>',
  owarn:'<rect x="2" y="2" width="20" height="20" rx="2" stroke="#ad5700" stroke-width="2"/><path d="M12 6v7M12 16v2" stroke="#ad5700" stroke-width="2.400"/>',
  oinfo:'<circle cx="12" cy="12" r="10.500" stroke="#5a78e0" stroke-width="1.800"/><path d="M12 6v2M12 10v8" stroke="#5a78e0" stroke-width="2"/>',
  otrace:'<circle cx="12" cy="12" r="10.500" stroke="#727272" stroke-width="1.800"/><path d="M12 6v2M12 10v8" stroke="#727272" stroke-width="2"/>',
  ook:'<path d="M20 12v6q0 3-3 3H5q-3 0-3-3V6q0-3 3-3h12M6 10l6 6L23 4" stroke="#138a2b" stroke-width="2.200"/>',
  obad:'<path d="M20 12v6q0 3-3 3H5q-3 0-3-3V6q0-3 3-3h12M6 10l6 6L23 4" stroke="#e2203e" stroke-width="2.200"/>',
  listadd:'<path d="M1 3h5v5H1zM1 13h5v5H1zM9 4h14M9 9h14M9 14h7M20 12v9M17 18l3 3 3-3" stroke-width="2"/>',
  trash:'<path d="M3 6h18M5 6v16h14V6M9 6V2h6v4M10 9v10M14 9v10" stroke-width="1.700"/>',
  wrench:`<path d="M23 6l-5 3-3-3 3-5q-6-1-8 4v4L1 18q-1 2 1 4t4 1l9-9h4q5-2 4-8z" ${F}/>`,
  objrepo:'<path d="M1 3h22v5H1z" fill="#526069" stroke="none"/><path d="M1 4h22v15H1zM4 12h9M4 16h8" stroke="#526069" stroke-width="2"/><path d="M13 13l5-3 5 3v6l-5 3-5-3z" fill="#f0883a" stroke="none"/><path d="M18 10l5 3-5 3z" fill="#39a0e8" stroke="none"/>',
  outline:'<path d="M1 2h4M8 3h13M4 6v15M8 9h8M8 15h13M8 21h8M3 9h3M3 15h3M3 21h3" stroke-width="2"/>',
  testex:'<path d="M6 1h9M8 1v8L2 21h9M13 1v6" stroke="#526069" stroke-width="2"/><circle cx="15" cy="14" r="5.500" stroke="#1f74e0" stroke-width="2.500"/><path d="M19 18l5 5" stroke="#1f74e0" stroke-width="2.500"/>',
  sparkle:`<g ${F}><path d="M14 2l2 6 6 2-6 2-2 6-2-6-6-2 6-2z"/><path d="M5 14l1 3 3 1-3 1-1 3-1-3-3-1 3-1zM18 17l1 2 2 1-2 1-1 3-1-3-2-1 2-1z"/></g>`,
  cloud:'<path d="M6 19q-5 0-5-4t5-4q1-5 6-5t6 5q5 0 5 4t-4 4z"/>',
  dot:`<circle cx="12" cy="12" r="8" ${F}/>`,
  robot:'<rect x="1" y="1" width="22" height="22" rx="2" fill="#4d94ea" stroke="none"/><circle cx="12" cy="12" r="5.500" stroke="#0067df" stroke-width="2.500"/>'
};
define('ui-icon', ':host{display:inline-flex;flex:none}svg{display:block;overflow:visible}', el => {
  const s = el.getAttribute('size') || 24, w = el.getAttribute('weight') || 1.5;
  return `<svg width="${s}" height="${s}" viewBox="0 0 24 24" fill="none" stroke="currentColor" stroke-width="${w}" aria-hidden="true">${ICONS[el.getAttribute('name')] || ''}</svg>`;
});

/* ---------- browser window ---------- */
define('browser-tab', `
:host{display:block;flex:1;min-width:0;height:50px;padding:8px 0 0;position:relative;color:#c9cbe0;font-size:15px}
.t{display:flex;align-items:center;height:34px;margin:0 6px;padding:0 8px}
.n{flex:1;min-width:0;margin:0 9px;white-space:nowrap;overflow:hidden}
:host([fade]) .n{-webkit-mask-image:linear-gradient(90deg,#000 86%,transparent);mask-image:linear-gradient(90deg,#000 86%,transparent)}
:host([active]) .t{background:#373b4f;height:42px;padding-bottom:8px;border-radius:12px 12px 0 0;color:#e4e5f2}
:host([active]) .t::before,:host([active]) .t::after{content:"";position:absolute;bottom:0;width:12px;height:12px}
:host([active]) .t::before{left:-6px;background:radial-gradient(circle at 0 0,transparent 12px,#373b4f 12px)}
:host([active]) .t::after{right:-6px;background:radial-gradient(circle at 100% 0,transparent 12px,#373b4f 12px)}
:host([sep])::after{content:"";position:absolute;right:0;top:15px;width:2px;height:20px;background:#41434f}
.c{width:16px;margin-left:8px}`,
 el => `<div class="t">${ic(el.getAttribute('icon'),20)}<span class="n"><slot></slot></span>${el.hasAttribute('active')?ic('rec',17):''}<button class="c" aria-label="Close tab">${ic('x',14,'weight="2.5"')}</button></div>`);
define('browser-chrome', `
:host{display:block;background:#292b37;color:#c9cbe0}
.tabs{display:flex;height:50px;align-items:center;padding:0 0 0 8px}
.list{display:flex;width:1490px;margin-left:3px}
.drop{width:35px;height:34px;border-radius:11px;background:#3a3a3f;color:#fff}
.add{width:38px}
.win{margin-left:auto;display:flex;color:#80828f}.win button{width:57px;height:50px}
.bar{background:#373b4f;display:flex;height:50px;padding:8px 5px 0;align-items:center}
.bar>button{width:45px;height:42px;flex:none}
.bar>.dim{color:#74778c}
.url{flex:1;min-width:0;height:42px;margin:0 12px 0 10px;border-radius:21px;background:#202438;display:flex;align-items:center;padding:0 18px 0 6px}
.cam{width:30px;height:30px;border-radius:50%;background:#b4c5ff;color:#1b2b5c}
.url input{flex:1;min-width:0;margin:0 0 0 10px;font-size:17px;color:#cdd0e2}
.sep{width:22px;display:flex;justify-content:center}.sep i,.bm>i{width:2px;height:20px;background:#51566c}
.bm{background:#373b4f;height:51px;display:flex;align-items:center;font-size:14px;border-bottom:1px solid #4a4d5e;padding:0 19px 0 23px}
.bm>i:first-of-type{margin:0 9px 0 19px}
.q{width:40px}
.l{display:flex;align-items:center;gap:8px;white-space:nowrap}
.l.a{width:143px;margin-left:10px}.l.b{width:192px}
.all{margin-left:auto;display:flex;align-items:center;gap:10px}.all i{width:2px;height:20px;background:#51566c;margin-right:8px}`,
 () => `<div class="tabs"><button class="drop" aria-label="Search tabs">${ic('down',16,'weight="3"')}</button>
 <div class="list"><browser-tab icon="moviebox" sep>Modern Family- Moviebox</browser-tab><browser-tab icon="whatsapp" sep>(21) WhatsApp</browser-tab><browser-tab icon="globe">A1648 BI.pdf</browser-tab><browser-tab icon="webex" active fade>In meeting · Meeting · Webex</browser-tab><browser-tab icon="github" sep fade>Zuhu162 (Zuhayer Adnan Siddique)</browser-tab></div>
 <button class="add" aria-label="New tab">${ic('plus',16,'weight="2.5"')}</button>
 <div class="win"><button aria-label="Minimize">${ic('minus',14)}</button><button aria-label="Restore">${ic('restore',17)}</button><button aria-label="Close">${ic('x',17)}</button></div></div>
 <div class="bar"><button aria-label="Back">${ic('back',20,'weight="2"')}</button><button class="dim" aria-label="Forward">${ic('fwd',20,'weight="2"')}</button><button aria-label="Reload">${ic('reload',20,'weight="2"')}</button>
 <div class="url"><button class="cam" aria-label="Camera in use">${ic('camera',18,'weight="2"')}</button><input aria-label="Address" value="utm.webex.com/wbxmjs/joinservice/sites/utm/meeting/download/570789547d5748fcb572693d60101913?siteurl=utm&amp;MTID=mcd69b3016cdb09bd6c8d4b..."><button aria-label="Bookmark">${ic('star',20,'weight="2"')}</button></div>
 <button aria-label="Blocker">${ic('noscript',20)}</button><button aria-label="Lighthouse">${ic('lighthouse',20)}</button><button aria-label="ABP">${ic('abp',20)}</button><button aria-label="Web">${ic('webbadge',30)}</button><button aria-label="Extension off">${ic('offext',26)}</button><button aria-label="Extensions">${ic('puzzle',20,'weight="2"')}</button><span class="sep"><i></i></span><button aria-label="Media">${ic('queue',20,'weight="2"')}</button><button aria-label="Profile">${ic('avatar',25)}</button><button aria-label="Menu">${ic('dotsv',20)}</button></div>
 <div class="bm">${ic('apps',18,'weight="2"')}<i></i>${['whatsapp','gmail','facebook','youtube','mt','tealplay','blueplay','sphere','github','prism','messenger','telegram','sheets'].map(n=>`<button class="q" aria-label="${n}">${ic(n,20)}</button>`).join('')}
 <a class="l a" href="#">${ic('utm',20)}MyUTM Portal</a><a class="l b" href="#">${ic('sunnah',19)}Sunnah.com - Sayin...</a><a class="l b" href="#">${ic('utm',20)}Dashboard | Elearni...</a><a class="l" href="#">${ic('heart',20)}click-globe-score -...</a>
 <span class="all"><i></i>${ic('folder',22,'weight="2"')}All Bookmarks</span></div>`);

/* ---------- meeting ---------- */
define('video-tile', `
:host{display:grid;place-items:center;position:relative;background:#484848;border-radius:10px;height:114px;color:#fff;font-size:19px;white-space:nowrap}
ui-icon{position:absolute;left:11px;bottom:10px}.red{color:#ee8090}`,
 el => `<slot></slot>${el.getAttribute('badge')==='mute'?ic('micoff',18,'class="red"'):el.getAttribute('badge')==='share'?ic('sharebox',18):''}`);
define('shared-slide', `
:host{display:flex;flex-direction:column;position:relative;width:950px;flex:1;background:#fff;color:#222;font-family:"Open Sans",sans-serif;font-feature-settings:normal}
.brand{display:flex;align-items:center;padding-top:22px}
.sq{width:32px;height:32px;background:#84103e}
.brand ui-icon{margin:0 4px 0 13px}
.logo b{display:block;font:700 29px/26px "Liberation Serif",serif;color:#84103e}
.logo small{display:block;font:700 4px/7px "Liberation Sans",sans-serif;color:#84103e}
.body{padding:59px 157px 0 151px}
h2{margin:0;font-size:16px;line-height:20px;color:#8c3a0e}
ul{margin:7px 0 0;padding:0 0 0 54px;font-size:14px;line-height:14px;text-align:justify}
.foot{margin-top:auto;display:flex;align-items:flex-end;gap:11px;padding-bottom:17px;color:#84103e;font-size:12px;line-height:18px}
.foot hr{flex:1;border:0;height:2px;background:#84305a;margin:0}
.foot span:not(.sq){font-size:13px}
.foot .sq{width:22px;height:23px}
.ctl{position:absolute;left:2px;bottom:2px;display:flex;gap:5px;color:#d9d3d6}
.cur{position:absolute;left:345px;top:106px}`,
 () => `<div class="brand"><span class="sq"></span>${ic('seal',35)}<span class="logo"><b>UTM</b><small>UNIVERSITI TEKNOLOGI MALAYSIA</small></span></div>
 <div class="body"><h2>References</h2><ul><li>Goetsch, David, L. (2010) The basics of occupational safety, Pearson Prentice Hall, New Jersey</li></ul></div>
 <div class="foot"><hr><span>innovative ● entrepreneurial ● global</span><span class="sq"></span></div>
 <div class="ctl">${['pleft','pright','ppen','pgrid','pzoom','pdots'].map(n=>ic(n,18,'weight="1"')).join('')}</div><div class="cur">${ic('cursor',12)}</div>`);
define('chat-message', `
:host{display:flex;gap:18px}
.av{width:40px;height:40px;border-radius:50%;background:#7f4400;color:#fff;display:grid;place-items:center;flex:none}
.n{font-size:17px;line-height:28px;color:#b2b2b2;white-space:nowrap;display:flex;gap:10px}
.m{font-size:19px;line-height:30px;color:#f2f2f2}
:host(:not([from])) .av{visibility:hidden;height:0}`,
 el => `<span class="av">${ic('guest',24)}</span><div>${el.hasAttribute('from')?`<div class="n"><span>${el.getAttribute('from')}</span><span>${el.getAttribute('at')}</span></div>`:''}<div class="m"><slot></slot></div></div>`);
define('chat-panel', `
:host{display:flex;flex-direction:column;background:linear-gradient(#242424,#101010);border-radius:14px 0 0 0;color:#f5f5f5;min-height:0}
header{display:flex;justify-content:space-between;align-items:center;height:66px;padding:0 24px 0 15px;font-size:20px;font-weight:700}
nav{display:flex;margin:12px 0 15px 21px;font-size:17px;align-items:center;color:#b8b8b8}
nav button{height:35px;border-radius:18px;padding:0 12px}nav button:first-child{background:#4a4a4a;color:#fff;font-weight:700;margin-right:10px}
.ban{display:flex;align-items:center;height:69px;margin:0 13px 16px 25px;padding:0 9px 0 16px;border-radius:26px;background:#0a274a;color:#64b4fa;font-size:17px;line-height:25px}
.ban p{flex:1;margin:2px 16px 0}.ban button+button{margin-left:18px}
.list{flex:1;min-height:0;margin:0 20px;border-bottom:2px solid #e88b0a;display:flex;position:relative;overflow:hidden}
.msgs{flex:1;min-width:0;padding-left:5px;margin-top:-13px;display:flex;flex-direction:column;gap:30px}
.gap{display:inline-block;width:180px}
.sb{width:19px;background:#2c2c2c;display:flex;flex-direction:column;align-items:center;padding:10px 0 7px}
.sb i,.sb b{border:6px solid transparent;border-top:0;border-bottom:10px solid #9f9f9f}
.sb b{border-bottom:0;border-top:10px solid #9f9f9f}
.sb span{width:11px;height:21px;border-radius:6px;background:#9f9f9f;margin:auto 0 9px}
.new{position:absolute;left:104px;top:76px;height:35px;width:179px;border-radius:18px;background:#1170cf;color:#fff;font-size:18px;gap:8px}
.tools{display:flex;align-items:center;gap:22px;height:60px;padding:0 22px 0 51px;color:#bdbdbd}
.tools .w{margin-left:auto;width:38px;height:28px;background:#37200a;color:#e88b0a;border-radius:4px}
.tools .blue{color:#64b4fa}
.in{display:flex;padding:0 25px 0 40px;height:85px;align-items:flex-start}
textarea{flex:1;min-width:0;height:61px;resize:none;overflow:hidden;font-size:17px;line-height:25px;padding-top:11px}
textarea::placeholder{color:#b2b2b2;opacity:1}
.in .sb{height:63px;padding:7px 0 5px;margin:-4px 6px 0 0;justify-content:space-between}
.in .send{width:40px;height:40px;border:1px solid #4d4d4d;border-radius:50%;color:#6d6d6d}`,
 () => `<header>Chat<button aria-label="Close chat">${ic('x',20)}</button></header>
 <nav><button>Everyone</button><button>Direct</button></nav>
 <div class="ban">${ic('info',18)}<p>Messages to everyone will be saved<br>after the meeting.</p><button aria-label="Help">${ic('help',20)}</button><button aria-label="Dismiss">${ic('x',16)}</button></div>
 <div class="list"><div class="msgs"><chat-message>explosive material not properly stored</chat-message><chat-message from="AISHA WAHIDA" at="11:57 AM">The<span class="gap"></span>as</chat-message><chat-message from="Nabilah" at="11:59 AM">because pain receptor at epidermis<br>layer ?</chat-message><chat-message from="TASNIM MOHAMED ELBAHOUTY" at="11:59 AM">nerves already damaged</chat-message></div>
 <div class="sb"><i></i><span></span><b></b></div><button class="new">New messages ${ic('wdown',19)}</button></div>
 <div class="tools"><button class="blue" aria-label="Markdown">${ic('md',18,'weight="2"')}</button><button aria-label="Emoji">${ic('smile',18)}</button><button aria-label="GIF">${ic('gif',18)}</button><button aria-label="Mention">${ic('at',18)}</button><button class="w" aria-label="External users">${ic('warnuser',19,'weight="1.8"')}</button></div>
 <div class="in"><textarea aria-label="Message" placeholder="Write a message to PSC GLRT0030 OSHE for Engineering Industry and Laboratory 10 AND"></textarea><div class="sb"><i></i><b></b></div><button class="send" aria-label="Send">${ic('send',20)}</button></div>`);
define('meeting-app', `
:host{display:flex;flex-direction:column;flex:1;min-height:0;background:linear-gradient(#1b1b1b,#101010);color:#f2f2f2;font-family:Inter,"Open Sans",sans-serif;font-feature-settings:"zero","cv08"}
header{display:grid;grid-template-columns:1fr auto 1fr;align-items:center;height:62px;padding:4px 10px 0;font-size:17px;font-weight:500}
header div{display:flex;justify-content:flex-end;gap:15px;grid-column:3}
header span{grid-column:2}
header button{height:40px;border:1px solid #7c7c7c;border-radius:20px;background:#000;font-size:19px;gap:11px;padding:0 16px}
main{flex:1;min-height:0;display:grid;grid-template-columns:1fr 500px}
.stage{display:flex;flex-direction:column;align-items:center;padding-top:4px}
.strip{display:flex;align-items:center;width:100%;padding:0 21px;gap:21px}
.strip>button{width:35px;height:35px;border:1px solid #6b6b6b;border-radius:50%;background:#000;flex:none}
.strip>button:first-child{color:#777;border-color:#333}
.tiles{flex:1;display:grid;grid-template-columns:repeat(6,1fr);gap:10px}
.view{display:grid;grid-template-columns:1fr auto 1fr;align-items:center;width:100%;height:65px;padding:21px 20px 0;font-size:17px;font-weight:500}
.view div{display:flex;align-items:center;gap:37px;color:#aaa}.view b{color:#fff;font-weight:500}
.view div:last-child{justify-content:flex-end;gap:22px;padding-right:7px;color:#ccc}
footer{display:grid;grid-template-columns:1fr auto 1fr;align-items:center;height:90px;padding:10px 33px 0 29px;font-size:20px;font-weight:500}
.mid{display:flex;gap:10px;padding-left:4px}
.mid>button,.mid>div{height:50px;border:1px solid #777;border-radius:25px}
.mid>button{width:50px;gap:14px}
.mid>.unm{width:178px}.mid>.vid{width:207px}.mid>.shr{width:132px}
.mid>div{width:102px;display:flex;align-items:center;justify-content:center;gap:14px}.mid i{width:1px;height:26px;background:#666}
.mid>.end{background:#db1f30;border-color:#db1f30}
.unm>:first-child,.vid>:first-child{color:#ee6c7c}
.r{display:flex;justify-content:flex-end;align-items:center}
.r button{gap:12px;height:50px}.r .c{width:122px;background:#444;border-radius:25px;margin:0 29px 0 31px;font-weight:700}`,
 () => `<header><span>PSC GLRT0030 OSHE for Engineering Industry and Laboratory 10 AND 11 MAY 2025</span><div><button>${ic('layout',19)}Layout</button><button>${ic('shield',19)}Meeting info</button></div></header>
 <main><div class="stage"><div class="strip"><button aria-label="Previous">${ic('wleft',20)}</button><div class="tiles"><video-tile badge="share">skm3 webex</video-tile><video-tile></video-tile><video-tile badge="mute">MUHAMMAD HO...</video-tile><video-tile badge="mute">saidi faizhan b22...</video-tile><video-tile badge="mute">NUR AFINA AINN...</video-tile><video-tile></video-tile></div><button aria-label="Next">${ic('wright',20)}</button></div>
 <div class="view"><span>Viewing skm3 webex's shared content</span><div>${ic('minus',18)}<b>100%</b>${ic('plus',18)}</div><div>${ic('scribble',22)}${ic('full',22)}</div></div>
 <shared-slide></shared-slide></div><chat-panel></chat-panel></main>
 <footer><button aria-label="Captions" style="justify-self:start">${ic('cc',23,'weight="1.7"')}</button>
 <div class="mid"><button class="unm">${ic('micoff',23)}Unmute${ic('down',18,'weight="2"')}</button><button class="vid">${ic('camoff',23)}Start video${ic('down',18,'weight="2"')}</button><button class="shr">${ic('sharebox',23)}Share</button><div><button aria-label="Raise hand">${ic('hand',24)}</button><i></i><button aria-label="Reactions">${ic('smileplus',24)}</button></div><button aria-label="More">${ic('dotsh',20)}</button><button class="end" aria-label="Leave">${ic('x',28)}</button></div>
 <div class="r"><button>${ic('people',24)}Participants</button><button class="c">${ic('bubble',23)}Chat</button><button aria-label="More">${ic('dotsh',13)}</button></div></footer>`);

/* ---------- taskbar: both screens share it, sized with custom properties ---------- */
define('task-bar', `
:host{display:grid;grid-template-columns:1fr auto 1fr;align-items:center;background:#070707;border-top:1px solid #3a3a3a;color:#f0f0f0;height:48px;font-size:11px;line-height:16px;
 --cell:44px;--search:220px;--gap:13px;--pill:32px;--txt:13px;--pad:12px}
:host([large]){height:60px;font-size:14px;line-height:20px;--cell:55px;--search:274px;--gap:16px;--pill:40px;--txt:16px;--pad:14px}
.we{display:flex;align-items:center;gap:7px;padding-left:20px}
:host([large]) .we{padding-left:27px;gap:9px}
.we span span{color:#c4c4c4}
.c{display:flex;align-items:center;padding-left:var(--pad)}
.s{display:flex;align-items:center;width:var(--search);height:var(--pill);border-radius:20px;background:#2a2a2a;border:1px solid #3b3b3b;margin:0 2px 0 var(--gap);padding:0 14px;font-size:var(--txt)}
.s input{width:100%;margin-left:10px}.s input::placeholder{color:#cfcfcf;opacity:1}
.a{width:var(--cell);height:46px;position:relative;flex:none}
:host([large]) .a{height:57px}
.a.run::after{content:"";position:absolute;bottom:2px;left:50%;width:6px;height:3px;margin-left:-3px;border-radius:2px;background:#8c8c8c}
:host([large]) .a.run::after{width:8px;margin-left:-4px;height:4px;bottom:3px}
.a.wps::before,.a.uipath::before{content:"";position:absolute;inset:3px 2px;border-radius:5px;background:#85464b}
.a.wps::before{border-right:3px double #5b2b30}
.a.uipath::before{background:#1d1d1d;border:1px solid #2c2c2c}
.a ui-icon{position:relative}
.a.wps::after{background:#ff9aa4!important}.a.uipath::after{background:#4cc2ff!important;width:16px!important;margin-left:-8px!important}
.r{display:flex;justify-content:flex-end;align-items:center;text-align:right;padding-right:19px}
:host([large]) .r{padding-right:28px}
.r ui-icon{margin-right:9px}`,
 el => { const L = el.hasAttribute('large'), z = L?30:24;
  const apps = ['explorer','notion','snip','discord','spotify','vscode','chrome','wps','cube','uipath','player'];
  const run = 'explorer chrome wps cube uipath player';
  return `<div class="we">${ic('weather',L?29:23)}<span>32°C<br><span>Partly sunny</span></span></div>
  <div class="c"><button aria-label="Start">${ic('start',L?30:23)}</button><label class="s">${ic('search',L?20:16,'weight="2"')}<input aria-label="Search" placeholder="Search"></label>${apps.map(n=>`<button class="a ${n} ${run.includes(n)?'run':''}" aria-label="${n}">${ic(n,n==='cube'||n==='notion'?z-4:z)}</button>`).join('')}</div>
  <div class="r">${L?'':`${ic('up',18,'weight="2.5" style="margin-right:15px"')}${ic('tmic',16,'style="color:#8ad4f5;margin-right:16px"')}${ic('wifi',16)}${ic('vol',16)}${ic('batt',16,'style="margin-right:17px"')}`}<span>12:08 PM<br>5/10/2025</span></div>`; });

/* ---------- studio ---------- */
define('studio-title', `
:host{display:grid;grid-template-columns:1fr auto 1fr;height:30px;background:#0067df;color:#fff;font-size:12px;align-items:center}
nav{display:flex;gap:21px;padding-left:11px;font-size:13px}
nav button{height:22px;border-bottom:2px solid transparent;margin-top:4px}nav .on{border-color:#fff}
.r{display:flex;justify-content:flex-end;align-items:center}
.r button{width:32px;height:30px}.r i{width:1px;height:18px;background:#5ea0ee;margin:0 5px 0 4px}
.r .z{width:23px;height:23px;border-radius:50%;background:#f5f5f5;color:#111;margin:0 16px 0 6px}
.r .w{width:44px}`,
 () => `<nav><button>HOME</button><button class="on">DESIGN</button><button>DEBUG</button></nav><span>LeaveAutomation - UiPath Studio Community</span>
 <div class="r"><button aria-label="Left panel">${ic('pleftp',14,'weight="2"')}</button><button aria-label="Bottom panel">${ic('pbotp',14,'weight="2"')}</button><button aria-label="Right panel">${ic('prightp',14,'weight="2"')}</button><i></i><button aria-label="Search">${ic('lens',16)}</button><button aria-label="Feedback">${ic('feedback',16)}</button><button aria-label="Help">${ic('help',17)}${ic('down',10,'weight="3"')}</button><button class="z">ZS</button><button class="w" aria-label="Minimize">${ic('minus',13,'weight="2"')}</button><button class="w" aria-label="Restore">${ic('restore',15)}</button><button class="w" aria-label="Close">${ic('x',15)}</button></div>`);
define('ribbon-button', `
:host{display:block;flex:none;color:#53616a}
:host([off]),:host([dim]){color:#b3b3b3}
button{width:100%;height:70px;flex-direction:column;justify-content:flex-start;gap:3px;line-height:15px}
span{display:block;text-align:center;color:#161616}
:host([off]) span{color:#9a9a9a}
ui-icon{vertical-align:middle}`,
 el => { const [a,b=''] = el.getAttribute('label').split('|');
  const ch = el.hasAttribute('menu') ? ic('down',11,'weight="3.5"') : '';
  return `<button>${ic(el.getAttribute('icon'),24)}<span>${a}${b||ch?`<br>${b} ${ch}`:''}</span></button>`; });
define('studio-ribbon', `
:host{display:flex;height:81px;background:#fbfbfb;border-bottom:1px solid #e6e8e8;padding:6px 6px 0;font-size:11px}
i{width:1px;height:70px;background:#e0e0e0;flex:none}
.clip{display:grid;grid-template-columns:60px 56px;grid-auto-flow:column;grid-template-rows:repeat(3,20px);row-gap:6px;padding-left:8px;width:125px}
.clip button{justify-content:flex-start;gap:6px;color:#9a9a9a}.clip .on{color:#161616}.clip .on ui-icon{color:#53616a}.clip .off ui-icon{color:#b3b3b3}
.end{margin-left:auto;display:flex;gap:12px;align-items:flex-end;height:68px;padding-right:4px;color:#222}`,
 () => { const b=(i,l,w,o='')=>`<ribbon-button icon="${i}" label="${l}" style="width:${w}px" ${o}></ribbon-button>`;
 return b('newf','New',44,'off menu')+b('save','Save',42,'menu dim')+b('exportas','Export|As',52,'menu')+b('stop','Stop',42)+'<i></i>'+
 `<div class="clip"><button class="off">${ic('cut',17)}Cut</button><button class="off">${ic('copy',17)}Copy</button><button class="off">${ic('paste',17)}Paste</button><button class="on">${ic('undo',15)}Undo</button><button class="on">${ic('redo',15)}Redo</button></div><i></i>`+
 b('packages','Manage|Packages',71,'off')+'<i></i>'+b('dbs','Manage|Entities',65,'off')+'<i></i>'+b('flask','Test|Manager',81,'menu')+'<i></i>'+
 b('recorder','App/Web|Recorder',74,'off')+b('vision','Computer|Vision',66,'off')+b('events','User|Events',64,'off menu')+b('table','Table|Extraction',69,'off')+'<i></i>'+
 b('uiexp','UI|Explorer',64)+'<i></i>'+b('remove','Remove|Unused',74,'off menu')+'<i></i>'+b('analyze','Analyze|File',65,'off menu style-dark')+'<i></i>'+b('excel','Export|to Excel',62,'off')+'<i></i>'+b('publish','Publish',63,'menu dim')+'<i></i>'+
 `<div class="end"><button aria-label="Collapse ribbon">${ic('up',14,'weight="2.5"')}</button><button aria-label="Pin ribbon">${ic('pin',14)}</button></div>`; });
define('panel-head', `
:host{display:flex;align-items:center;height:24px;padding:0 7px 0 6px;font-size:11px;color:#222;gap:8px}
.g{flex:1;height:6px;background:radial-gradient(circle,#9a9a9a 0 .7px,transparent .9px) 0 0/4px 4px,radial-gradient(circle,#9a9a9a 0 .7px,transparent .9px) 2px 2px/4px 4px}
button{color:#666}`,
 () => `<slot></slot><span class="g"></span><button aria-label="Options">${ic('down',13,'weight="2.5"')}</button><button aria-label="Pin">${ic('pin',12)}</button>`);
define('tree-row', `
:host{display:flex;align-items:center;height:22px;white-space:nowrap;color:#526069}
.t{color:#161616;margin-left:5px}
:host([bold]) .t{font-weight:700}:host([sel]){background:#ededee}
.ch{width:18px;color:#222;display:flex}.ch+ui-icon{margin-left:3px}
:host([depth="0"]) .ch{margin-left:3px}:host([depth="1"]) .ch{margin-left:24px}:host([depth="2"]) .ch{margin-left:44px}`,
 el => { const open=el.getAttribute('open');
  return `<span class="ch">${open?ic(open==='yes'?'down':'right',14,'weight="2.5"'):''}</span>${ic(el.getAttribute('icon'),16)}<span class="t"><slot></slot></span>`; });
define('project-panel', `
:host{display:flex;flex-direction:column;width:300px;font-size:11px}
.p{flex:1;min-height:0;background:#fff;border:1px solid #dfe2e2;display:flex;flex-direction:column;overflow:hidden}
.top{background:#fbfbfb}
.tb{display:flex;gap:12px;height:28px;padding:0 2px 0 10px;align-items:center;color:#526069}
.tb b{color:#0067df;font-weight:400;margin-left:-12px;align-self:flex-end;line-height:16px}.tb ui-icon:last-child{margin-left:auto;align-self:flex-end}
.s{display:flex;align-items:center;height:23px;border:1px solid #d9dcdc;border-width:1px 0;padding:0 6px 0 3px;gap:6px;color:#666}
.s input{flex:1;font-style:italic}.s input::placeholder{color:#666;opacity:1}
.tree{flex:1}
.hs{display:flex;align-items:center;height:17px;background:#fafafa;padding:0 2px;color:#666;gap:3px}.hs i{width:228px;height:11px;background:#e2e4e6}.hs ui-icon:last-child{margin-left:auto}
.tabs{display:flex;height:20px;color:#444}
.tabs button{gap:6px;padding:0 6px;border:1px solid #e1e4e4;border-top:0;border-left:0}
.tabs .on{background:#fff;color:#0048c0}.tabs button:last-child{border:0}`,
 () => `<div class="p"><div class="top"><panel-head>Project</panel-head><div class="tb">${['expandall','collapseall','reload','swap','folderfill','gear','filter'].map(n=>ic(n,n==='folderfill'||n==='swap'?18:16)).join('')}<b>6</b>${ic('overflow',8)}</div></div>
 <label class="s">${ic('lens',14)}<input placeholder="Search project (Ctrl+Alt+P)" aria-label="Search project"><button aria-label="Clear">${ic('x',12,'weight="2"')}</button></label>
 <div class="tree"><tree-row depth="0" open="yes" icon="projfolder">LeaveAutomation</tree-row><tree-row depth="1" open="yes" icon="deps">Dependencies (Windows)</tree-row>
 ${['UiPath.Excel.Activities = 3.0.1','UiPath.Mail.Activities = 2.1.10-preview','UiPath.System.Activities = 25.4.2','UiPath.UIAutomation.Activities = 25.2.1-','UiPath.WebAPI.Activities = 1.21.1'].map(t=>`<tree-row depth="2" open="no" icon="dep">${t}</tree-row>`).join('')}
 <tree-row depth="1" icon="dbblue">Entities</tree-row><tree-row depth="1" icon="folders">Templates</tree-row><tree-row depth="1" icon="folderrow">Exception_Screenshots</tree-row>
 ${['DownloadExcel','Email','ErrorHandler','GetUserInput','InputExcelData','Login','Main','PostLog','','ValidateExcelFile'].map(t=>t?`<tree-row depth="1" icon="${t==='Main'?'xamlmain':'xaml'}" ${t==='Main'?'bold':''} ${t==='ErrorHandler'?'sel':''}>${t}.xaml</tree-row>`:'<tree-row depth="1" icon="json">project.json</tree-row>').join('')}</div>
 <div class="hs">${ic('left',12,'weight="2.5"')}<i></i>${ic('right',12,'weight="2.5"')}</div></div>
 <div class="tabs"><button>${ic('toolbox',15)}Activities</button><button class="on">${ic('folderrow',16,'style="color:#526069"')}Project</button><button>${ic('snippets',15)}Snippets</button></div>`);
define('expr-field', `
:host{display:block;margin-bottom:9px}
label{display:block;line-height:16px;color:#161616}label b{color:#0067df;font-weight:400}
.f{display:flex;margin-top:4px;height:22px;border:1px solid #d3d6da;background:#fff;align-items:center}
.b{width:20px;align-self:stretch;background:#f4f5f7;color:#2f7ee6;display:grid;place-items:center;line-height:1;font-size:12px}
input,select{flex:1;min-width:0;height:20px;appearance:none;color:#182746}
input{padding-left:7px}
select{padding-left:2px;font-style:italic;color:#666}
input::placeholder{color:#666;font-style:italic;opacity:1}
.e{color:#666;margin-right:5px}
.p{width:23px;align-self:stretch;border-left:1px solid #d3d6da}`,
 el => { const k=el.getAttribute('kind')==='select';
  return `<label for="i">${el.getAttribute('label')}${el.hasAttribute('required')?' <b>*</b>':''}</label><div class="f">${k?`<select id="i"><option>${el.getAttribute('placeholder')}</option></select>${ic('down',11,'weight="3.5" class="e"')}`:`<span class="b">{}</span><input id="i" value='${el.getAttribute('value')||''}' placeholder="${el.getAttribute('placeholder')||''}">${ic('full',12,'weight="2" class="e"')}`}<button class="p" aria-label="Add">${ic('addb',14)}</button></div>`; });
define('activity-card', `
:host{display:block;border:1px solid #cfd9dd;background:#fff;--bar:#0067df;width:334px}
header{display:flex;align-items:center;height:24px;background:#f6f7f7;border-left:2px solid var(--bar);margin-left:-1px;padding:0 4px 0 9px;color:#6b7276}
header b{font-weight:400;color:#2d3a45;margin-left:14px;flex:1}
header button+button{margin-left:8px}
.b{padding:8px 18px 5px}`,
 el => `<header>${ic(el.getAttribute('icon'),16)}<b>${el.getAttribute('heading')}</b><button aria-label="Options">${ic('dotsv',16)}</button><button aria-label="Collapse">${ic('collapse2',12)}</button></header><div class="b"><slot></slot></div>`);
define('flow-arrow', `:host{display:flex;flex-direction:column;align-items:center;height:32px;flex:none}i{flex:1;width:1px;background:#8f9497}b{border:5px solid transparent;border-bottom:0;border-top:9px solid #8f9497}`, () => '<i></i><b></b>');
define('workflow-editor', `
:host{display:flex;flex-direction:column;flex:1;min-width:0;font-size:11px;color:#161616}
.tabs{display:flex;height:24px;border-bottom:2px solid #0067df}
.tabs button{height:22px;padding:0 6px}.tabs .on{background:#0067df;color:#fff;gap:10px;width:59px}
.tabs button:nth-child(2){width:90px;margin-right:20px;justify-content:flex-start}
.tabs button:last-child{margin-left:auto;padding:0 4px;color:#666}
.crumb{display:flex;align-items:center;height:29px;background:#fff;border:1px solid #dfe2e2;border-bottom-color:#cfd9dd;border-top:0;padding:0 5px 0 11px}
.crumb i{margin-left:auto;width:1px;height:19px;background:#cfd9dd;margin-right:8px}.crumb button+button{margin-left:10px}
.mid{flex:1;min-height:0;display:flex;background:#fff;border:1px solid #dfe2e2;border-width:0 1px}
.cv{flex:1;display:flex;flex-direction:column;align-items:center;overflow:hidden}
.box{width:450px;border:1px solid #cfd9dd;border-top:0;display:flex;flex-direction:column;align-items:center;padding:3px 0 8px;flex:none}
.add{height:16px;color:#9a9fa2;margin:0 0 3px}
.add.t{margin:4px 0 0}
.btns{display:flex;justify-content:center;gap:10px;padding:3px 0 7px}
.btns button{width:70px;height:21px;background:#ebecee;border:1px solid #cdd0d3}
.vs{width:18px;background:#fafafa;display:flex;flex-direction:column;align-items:center;color:#666;padding:2px 0 6px}
.vs i{width:11px;height:171px;background:#e2e4e6;margin-top:auto;margin-bottom:3px}
.bot{display:flex;align-items:center;height:23px;background:#fbfbfb;border:1px solid #dfe2e2;border-top:0;padding:0 5px}
.bot button+button{margin-left:17px}
.bot .t{margin-left:auto;display:flex;align-items:center;gap:11px;color:#404040}.bot .t span{width:54px;margin-left:4px;font-family:"Liberation Sans",sans-serif;font-size:12px}
activity-card.s{width:204px}`,
 () => `<div class="tabs"><button class="on">Main ${ic('x',12,'weight="2"')}</button><button>InputExcelData</button><button>ErrorHandler</button><button aria-label="Tab list">${ic('down',13,'weight="2.5"')}</button></div>
 <div class="crumb"><span>Main Sequence</span><i></i><button>Expand All</button><button>Collapse All</button></div>
 <div class="mid"><div class="cv"><div class="box"><button class="add" aria-label="Add activity">${ic('addc',12)}</button>
 <activity-card icon="smtp" heading="Send SMTP Email" style="--bar:#e0393e"><expr-field label="To" required value='"zuhu1621@gmail.com"'></expr-field><expr-field label="Subject" value='"Data Entry Status Update - Success"'></expr-field><expr-field label="Body" value='"Hi Team,'></expr-field><expr-field label="Attachment(s)" placeholder="Enter a VB expression"></expr-field></activity-card>
 <button class="add t" aria-label="Add activity">${ic('addc',12)}</button></div><flow-arrow></flow-arrow>
 <activity-card class="s" icon="http" heading="HTTP Request"><div class="btns"><button>Import</button><button>Configure</button></div></activity-card><flow-arrow></flow-arrow>
 <activity-card icon="log" heading="Log Message" style="--bar:#0048a0"><expr-field label="Message" required value='"Main Process Ended"'></expr-field><expr-field label="Log Level" kind="select" placeholder="Select a level or leave empty for info"></expr-field></activity-card>
 <button class="add t" aria-label="Add activity">${ic('addc',12)}</button></div>
 <div class="vs">${ic('up',14,'weight="2"')}<i></i>${ic('down',14,'weight="2"')}</div></div>
 <div class="bot"><button>Variables</button><button>Arguments</button><button>Imports</button><div class="t">${ic('handf',15)}${ic('zoomf',15)}<span>100%</span><button aria-label="Zoom level">${ic('down',12,'weight="2"')}</button>${ic('fit',15)}${ic('overview',15)}</div></div>`);
define('properties-panel', `
:host{display:flex;flex-direction:column;width:299px;font-size:11px;color:#222}
.p{flex:1;background:#fff;border:1px solid #dfe2e2;border-bottom:2px solid #dfe2e2}
panel-head{background:#fbfbfb;border-bottom:1px solid #dfe2e2;padding-right:8px}
.ty{height:27px;background:#f5f5f5;padding:4px 3px}
.g{height:20px;background:#f5f5f5;font-weight:700;display:flex;align-items:center;gap:6px;padding-left:2px}
.g.f{outline:1px dashed #777;outline-offset:-1px}
.g i{width:9px;height:9px;border:1px solid #222;display:grid;place-items:center}.g i::after{content:"";width:5px;height:1px;background:#222}
.r{display:flex;align-items:center;height:22px;padding-left:6px;border-left:13px solid #f5f5f5;background:#fff}
.r.b{height:25px}
.r label{width:164px}
.r input[type=text]{flex:1;min-width:0;height:20px;border:1px solid #d3d6da;padding-left:2px;margin-right:1px}
.r input[type=checkbox]{appearance:none;width:14px;height:14px;border:1px solid #666;background:#fff;margin-left:4px}
.tabs{display:flex;height:20px}
.tabs button{flex:1;justify-content:flex-start;gap:5px;padding-left:5px;color:#526069}.tabs span{color:#444}.tabs .on{background:#fff;border:1px solid #dfe2e2;border-top:0}.tabs .on span{color:#0048c0}`,
 () => `<div class="p"><panel-head>Properties</panel-head><div class="ty">System.Activities.Statements.Sequence</div><div class="g f"><i></i>Common</div><div class="r"><label for="dn">DisplayName</label><input type="text" id="dn" value="Main Sequence"></div><div class="g"><i></i>Misc</div><div class="r b"><label for="pv">Private</label><input type="checkbox" id="pv"></div></div>
 <div class="tabs">${[['wrench','P...'],['toolbox','D...'],['objrepo','O...'],['outline','O...'],['testex','T...'],['sparkle','A...']].map(([i,t],n)=>`<button class="${n?'':'on'}">${ic(i,16)}<span>${t}</span></button>`).join('')}</div>`);
define('output-panel', `
:host{display:flex;flex-direction:column;height:179px;border:1px solid #dfe2e2;background:#fbfbfb;font-size:11px}
.tb{display:flex;align-items:center;height:28px;padding:0 2px 0 11px;gap:4px;color:#666}
.tb button{height:23px;padding:0 4px;gap:3px;border:1px solid #7a7f8a;background:#dcdde1;color:#222;font-size:12px}
.tb>ui-icon:first-child{margin-right:12px}.tb>ui-icon:nth-last-child(3){margin:0 8px 0 4px}.tb>ui-icon:last-child{margin-left:auto;align-self:flex-end}
.s{height:23px;border:1px solid #ccd0d4;background:#fff;padding:0 5px;display:flex}
.s input{flex:1;font-style:italic}.s input::placeholder{color:#666;opacity:1}
.rows{flex:1;display:flex;background:#fff;color:#6b6b6b}
.l{flex:1}.l div{display:flex;align-items:center;height:20px;gap:6px;padding-left:9px;white-space:nowrap}.l div>i{width:9px}
.vs{width:18px;background:#fafafa;display:flex;flex-direction:column;align-items:center;color:#666;padding:3px 0 2px}
.vs i{width:11px;height:15px;background:#e2e4e6;margin-top:auto;margin-bottom:3px}`,
 () => `<panel-head>Output</panel-head><div class="tb">${ic('clock',15,'weight="1.8"')}${[['oerr',0],['owarn',2],['oinfo',12],['otrace',2],['ook',0],['obad',0]].map(([i,n])=>`<button aria-pressed="true">${ic(i,15)}${n}</button>`).join('')}${ic('listadd',16)}${ic('trash',14)}${ic('overflow',8)}</div>
 <label class="s"><input placeholder="Search" aria-label="Search output"></label>
 <div class="rows"><div class="l"><div><i></i>Firdaus bin Majid,EMP058,Annual Leave,07/23/2025 00:00:00,,Rejected</div><div>${ic('oinfo',9)}Deleted Excel filepath: C:\\Users\\Asus\\Documents\\UiPath\\LeaveAutomation\\attachment_1ce538f9-ae09-4a28-bfdb-c7555bab91f1.xlsx</div><div>${ic('oinfo',9)}Login Process Started</div><div>${ic('oinfo',9)}Healing agent configuration.</div><div>${ic('otrace',9)}Audit: Using Web App. Browser: Chrome URL: http://localhost:8080/login</div></div><div class="vs">${ic('up',13,'weight="2.5"')}<i></i>${ic('down',13,'weight="2.5"')}</div></div>`);
define('status-strip', `
:host{display:flex;justify-content:flex-end;align-items:center;height:24px;background:#0067df;color:#fff;font-size:11px;padding-right:16px;gap:16px}
button{gap:6px}b{font-weight:600}.d{color:#2f80d8}.e{color:#7fb4f2}.sc{margin-left:18px}`,
 () => `<button aria-label="Robot">${ic('robot',11)}${ic('down',11,'weight="3"')}</button><button>${ic('dot',11,'class="d"')}zuhayersiddique162@gmail.... ${ic('down',11,'weight="3"')}</button><button class="sc">${ic('plus',12,'weight="4" class="e"')}Add To Source Control ${ic('down',11,'weight="3"')}</button><button>${ic('cloud',12,'class="e"')}Cloud Compatible ${ic('down',11,'weight="3"')}</button><b>VB, Windows</b>`);
define('studio-app', `
:host{display:flex;flex-direction:column;flex:1;min-height:0;background:#f3f5f5;border-right:1px solid #111}
.w{flex:1;min-height:0;display:flex;gap:6px;padding:7px 7px 0 6px}
.m{flex:1;min-width:0;display:flex;flex-direction:column;gap:6px}
.t{flex:1;min-height:0;display:flex;gap:7px}
.b{display:flex;gap:12px;height:32px;padding:9px 6px 0;font-size:11px;line-height:16px;color:#444}
.b span{border-bottom:6px solid #e9eaea;height:23px}`,
 () => `<studio-title></studio-title><studio-ribbon></studio-ribbon><div class="w"><project-panel></project-panel><div class="m"><div class="t"><workflow-editor></workflow-editor><properties-panel></properties-panel></div><output-panel></output-panel></div></div><div class="b"><span>Breakpoints &amp; Bookmarks</span><span>Error List</span></div><status-strip></status-strip>`);
define('dual-desktop', `
:host{display:grid;grid-template-columns:1fr 1fr;height:100vh}
section{display:flex;flex-direction:column;min-width:0;min-height:0}`,
 () => `<section><browser-chrome></browser-chrome><meeting-app></meeting-app><task-bar large></task-bar></section><section><studio-app></studio-app><task-bar></task-bar></section>`);
</script>
</body>
</html>
